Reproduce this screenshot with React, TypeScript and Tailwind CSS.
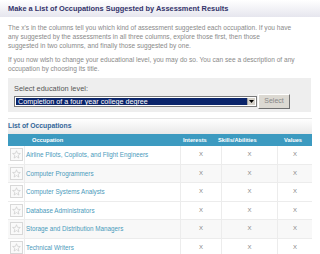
import React from "react";

const rows = [
  "Airline Pilots, Copilots, and Flight Engineers",
  "Computer Programmers",
  "Computer Systems Analysts",
  "Database Administrators",
  "Storage and Distribution Managers",
  "Technical Writers",
];

function StarBox() {
  return (
    <div className="w-[13px] h-[13px] border border-[#d8d8d8] bg-[#fafafa] flex items-center justify-center">
      <svg width="9" height="9" viewBox="0 0 10 10">
        <path d="M5 0.8 L6.2 3.7 L9.3 3.9 L6.9 5.9 L7.7 9 L5 7.3 L2.3 9 L3.1 5.9 L0.7 3.9 L3.8 3.7 Z" fill="none" stroke="#c8c8c8" strokeWidth="0.7" />
      </svg>
    </div>
  );
}

export default function App() {
  return (
    <div className="w-[320px] h-[254px] overflow-hidden bg-white" style={{ fontFamily: '"Liberation Sans", Arial, sans-serif' }}>
      <div className="h-[17px] bg-gradient-to-b from-white to-[#e6e6ee] flex items-center pl-[8px]">
        <span className="text-[7.4px] font-bold text-[#33336a] leading-none">Make a List of Occupations Suggested by Assessment Results</span>
      </div>
      <div className="px-[8px] pt-[6px] text-[6.6px] leading-[9px] text-[#8a8a8a]">
        <p>
          The x's in the columns tell you which kind of assessment suggested each occupation. If you have
          <br />
          any suggested by the assessments in all three columns, explore those first, then those
          <br />
          suggested in two columns, and finally those suggested by one.
        </p>
        <p className="mt-[5px]">If you now wish to change your educational level, you may do so. You can see a description of any occupation by choosing its title.</p>
      </div>
      <div className="mx-[8px] mt-[5px] w-[303px] h-[34px] bg-[#eeeeee] pl-[6px] pt-[6px]">
        <div className="text-[7.4px] leading-[9px] text-[#555555]">Select education level:</div>
        <div className="flex items-center mt-[1px]">
          <div className="w-[243px] h-[11px] border border-[#7a7a7a] bg-white flex items-stretch p-[1px]">
            <div className="flex-1 bg-[#0a246a] text-white text-[7.2px] leading-[7px] flex items-center pl-[2px]">Completion of a four year college degree</div>
            <div className="w-[8px] bg-[#d4d0c8] border-l border-[#a0a0a0] flex items-center justify-center">
              <svg width="5" height="3" viewBox="0 0 5 3"><path d="M0 0 L5 0 L2.5 3 Z" fill="#000" /></svg>
            </div>
          </div>
          <div className="ml-[1px] w-[32px] h-[15px] bg-[#dcd9d2] border border-t-white border-l-white border-b-[#707070] border-r-[#707070] text-[7px] text-[#888888] flex items-center justify-center">Select</div>
        </div>
      </div>
      <div className="mx-[8px] mt-[6px] w-[304px] h-[16px] border-t border-[#e4e4e4] bg-gradient-to-b from-white to-[#e8e8e8] flex items-center">
        <span className="text-[6.8px] font-bold text-[#336699]">List of Occupations</span>
      </div>
      <div className="mx-[8px] w-[304px] h-[12px] bg-[#3c9ac0] flex items-center text-white font-bold text-[5.7px]">
        <span className="ml-[24px] w-[151px]">Occupation</span>
        <span className="w-[35px]">Interests</span>
        <span className="w-[66px]">Skills/Abilities</span>
        <span>Values</span>
      </div>
      <div className="mx-[8px] w-[304px]">
        {rows.map((r, i) => (
          <div key={r} className={`flex h-[18.5px] border-b border-[#ececec] ${i % 3 === 1 ? "bg-[#f8f8f8]" : "bg-white"}`}>
            <div className="w-[17px] border-r border-[#ececec] flex items-center justify-center">
              <StarBox />
            </div>
            <div className="w-[155px] flex items-center pl-[1px] text-[6.3px] text-[#4a9abb]">{r}</div>
            <div className="w-[41px] border-l border-[#ececec] flex items-center justify-center text-[6px] text-[#888]">X</div>
            <div className="w-[56px] border-l border-[#ececec] flex items-center justify-center text-[6px] text-[#888]">X</div>
            <div className="flex-1 border-l border-[#ececec] flex items-center justify-center text-[6px] text-[#888]">X</div>
          </div>
        ))}
      </div>
    </div>
  );
}
